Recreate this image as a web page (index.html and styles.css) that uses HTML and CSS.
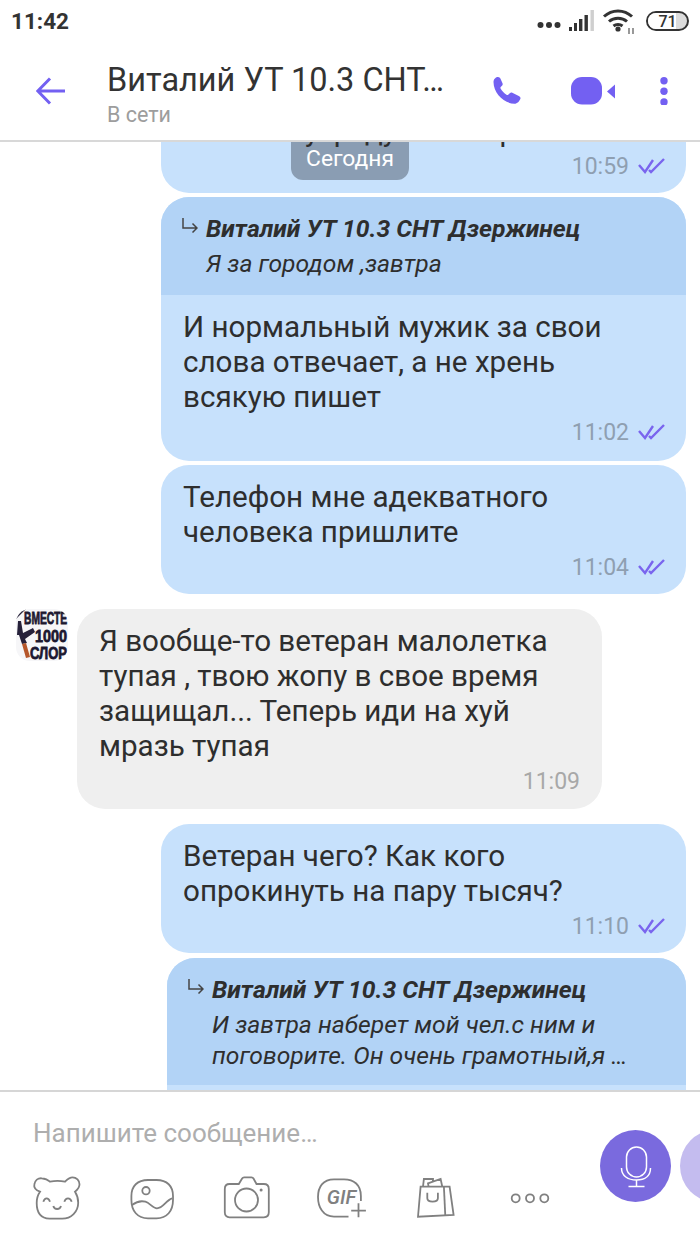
FILE: index.html
```html
<!DOCTYPE html>
<html lang="ru">
  <head>
    <meta charset="UTF-8" />
    <meta name="viewport" content="width=device-width, initial-scale=1.0" />
    <title>Виталий УТ 10.3 СНТ Дзержинец</title>
    <link rel="stylesheet" href="styles.css">
  </head>
  <body>
    <div class="screen">
      <header class="top">
        <div class="status">
          <span class="status__time">11:42</span>
          <div class="status__icons">
            <svg class="status__dots" width="24" height="8" viewBox="0 0 24 8"><circle cx="3.5" cy="4" r="3"/><circle cx="12" cy="4" r="3"/><circle cx="20.5" cy="4" r="3"/></svg>
            <svg class="status__signal" width="26" height="22" viewBox="0 0 26 22">
              <rect x="0" y="17" width="3" height="4"/><rect x="5" y="13" width="3" height="8"/><rect x="10" y="9" width="3.4" height="12"/><rect x="15.5" y="5" width="3.4" height="16"/><rect x="21.5" y="0" width="3.4" height="21" fill="#cfcfcf"/>
            </svg>
            <svg class="status__wifi" width="36" height="26" viewBox="0 0 36 26">
              <path d="M2 8.500C10 1 22 1 30 8.500M7 13.500C12 9 20 9 25 13.500M11.500 18C14 16 18 16 20.500 18" fill="none" stroke="#333" stroke-width="3"/>
              <circle cx="16" cy="21" r="2.600"/>
              <path d="M27 20v6M31 20v6" stroke="#555" stroke-width="1.200"/>
            </svg>
            <div class="battery">
              <div class="battery__fill"></div>
              <span class="battery__num">71</span>
            </div>
          </div>
        </div>
        <nav class="bar">
          <svg class="bar__back" width="30" height="28" viewBox="0 0 30 28" fill="none" stroke="#7360f2" stroke-width="3"><path d="M29 14H2M14 1.500 1.800 14 14 26.500"/></svg>
          <div class="bar__who">
            <p class="bar__name">Виталий УТ 10.3 СНТ…</p>
            <p class="bar__online">В сети</p>
          </div>
          <svg class="bar__phone" width="29" height="30" viewBox="0 0 29 30"><path d="M.5 6C.5 3 3 1 5 1c1.200 0 2 .8 2.500 1.800l2 4.500c.4 1 .2 1.700-.5 2.400L7.700 11c-.4.5-.4 1 0 1.700 1.500 2.500 3.300 4.300 5.800 6 .7.4 1.200.4 1.700 0l1.600-1.500c.8-.7 1.600-.8 2.500-.4l6.500 3.200c1.500.8 2 1.900 1.500 2.900-.8 2-3 4.800-5.800 4.800C11 27.700 .5 17 .5 6Z"/></svg>
          <svg class="bar__video" width="44" height="28" viewBox="0 0 44 28"><rect x="0" y="0" width="31" height="27.500" rx="11"/><path d="M44 7.500v14l-8-7Z"/></svg>
          <svg class="bar__more" width="8" height="28" viewBox="0 0 8 28"><circle cx="4" cy="3.700" r="3.700"/><circle cx="4" cy="14.300" r="3.700"/><circle cx="4" cy="25" r="3.700"/></svg>
        </nav>
      </header>

      <main class="chat">
        <div class="chat__date">Сегодня</div>

        <div class="msg msg--first">
          <div class="msg__body">
            <p class="msg__text msg__text--cut">у  р  ду              р</p>
            <div class="msg__meta">
              <span class="msg__time">10:59</span>
              <svg class="msg__check" width="27" height="16" viewBox="0 0 27 16"><use href="#checks"/></svg>
            </div>
          </div>
        </div>

        <div class="msg">
          <div class="msg__quote">
            <svg class="msg__arrow" width="17" height="15" viewBox="0 0 17 15" fill="none" stroke="#444" stroke-width="1.500"><path d="M2 0v10h14M11.500 5.500 16 10l-4.500 4.500"/></svg>
            <div>
              <p class="msg__author">Виталий УТ 10.3 СНТ Дзержинец</p>
              <p class="msg__quoted">Я за городом ,завтра</p>
            </div>
          </div>
          <div class="msg__body">
            <p class="msg__text">И нормальный мужик за свои<br>слова отвечает, а не хрень<br>всякую пишет</p>
            <div class="msg__meta">
              <span class="msg__time">11:02</span>
              <svg class="msg__check" width="27" height="16" viewBox="0 0 27 16"><use href="#checks"/></svg>
            </div>
          </div>
        </div>

        <div class="msg">
          <div class="msg__body">
            <p class="msg__text">Телефон мне адекватного<br>человека пришлите</p>
            <div class="msg__meta">
              <span class="msg__time">11:04</span>
              <svg class="msg__check" width="27" height="16" viewBox="0 0 27 16"><use href="#checks"/></svg>
            </div>
          </div>
        </div>

        <div class="msg-in">
          <svg class="msg-in__avatar" width="52" height="52" viewBox="0 0 52 52">
            <rect width="52" height="52" fill="#f6f6f8"/>
            <path d="M0 0h10L0 10Z" fill="#26213a"/>
            <g class="msg-in__logo">
              <text x="8" y="15" textLength="43" lengthAdjust="spacingAndGlyphs">ВМЕСТЕ</text>
              <text x="19" y="32.500" textLength="32" lengthAdjust="spacingAndGlyphs">1000</text>
              <text x="14" y="50" textLength="37" lengthAdjust="spacingAndGlyphs">СЛОР</text>
            </g>
            <path d="M2 12 5 12 7 24 17 19 19 23 9 30 11 34 6 35 3 26 1 26Z" fill="#26213a"/>
            <path d="M6 35 10 34 14 48 10 49Z" fill="#b5562a"/>
          </svg>
          <div class="msg-in__bubble">
            <p class="msg__text">Я вообще-то ветеран малолетка<br>тупая , твою жопу в свое время<br>защищал... Теперь иди на хуй<br>мразь тупая</p>
            <div class="msg__meta">
              <span class="msg__time msg__time--in">11:09</span>
            </div>
          </div>
        </div>

        <div class="msg">
          <div class="msg__body">
            <p class="msg__text">Ветеран чего? Как кого<br>опрокинуть на пару тысяч?</p>
            <div class="msg__meta">
              <span class="msg__time">11:10</span>
              <svg class="msg__check" width="27" height="16" viewBox="0 0 27 16"><use href="#checks"/></svg>
            </div>
          </div>
        </div>

        <div class="msg msg--wide">
          <div class="msg__quote">
            <svg class="msg__arrow" width="17" height="15" viewBox="0 0 17 15" fill="none" stroke="#444" stroke-width="1.500"><path d="M2 0v10h14M11.500 5.500 16 10l-4.500 4.500"/></svg>
            <div>
              <p class="msg__author">Виталий УТ 10.3 СНТ Дзержинец</p>
              <p class="msg__quoted">И завтра наберет мой чел.с ним и<br>поговорите. Он очень грамотный,я …</p>
            </div>
          </div>
          <div class="msg__body msg__body--empty"></div>
        </div>
      </main>

      <footer class="composer">
        <div class="composer__left">
          <p class="composer__hint">Напишите сообщение…</p>
          <div class="composer__tools">
            <svg width="48" height="42" viewBox="0 0 48 42" class="tool">
              <path d="M7 14.700C2.500 13 .8 10 1.300 7.500 2 3.500 5 1 8.700 1.300c3.500.2 6.300 1.500 8.300 3.400 5-1 10-1 15 0 2-2 4-4.400 7.500-4.400 4 0 7 3.500 7 7 0 3-2 5.500-4.500 7.400 2 3 3.200 7 3.200 11 0 9-7 15.900-16 15.900H16.500C7.500 41.300 3.700 35 3.700 26c0-4 1-8 3.300-11.300Z"/>
              <path d="M10.300 24.700c1.500-4.500 5.200-4.500 6.700 0M31.300 24.700c1.500-4.500 5.900-4.500 7.400 0M20.300 29c1 4 6.700 4 7.700 0"/>
            </svg>
            <svg width="48" height="42" viewBox="0 0 48 42" class="tool">
              <path d="M20 3h8.500C39 3 45 9 45 19v4c0 11-6 18.300-16.500 18.300H20C9.500 41.300 3.400 34 3.400 23v-4C3.400 9 9.500 3 20 3Z"/>
              <circle cx="18" cy="13.700" r="3.700"/>
              <path d="M4 28c4-3 9-4.500 13.400-3.300 4.500 1.300 7.500 6.600 11.600 6.600 6 0 9-8 15-10"/>
            </svg>
            <svg width="48" height="42" viewBox="0 0 48 42" class="tool">
              <path d="M7.500 7h9.300l3.300-5.500c.4-.7 1-1.200 2-1.200h7.400c1 0 1.600.5 2 1.200L34.500 7h7.300c3 0 5 2 5 5v23.300c0 3-2 5-5 5H7.500c-3 0-4.700-2-4.700-5V12c0-3 1.700-5 4.700-5Z"/>
              <circle cx="24.500" cy="23" r="11.500"/>
              <circle cx="39.100" cy="13" r="1.500" class="tool__fill"/>
            </svg>
            <div class="tool-gif">
              <svg width="52" height="42" viewBox="0 0 52 42" class="tool">
                <path d="M43.900 24V19C43.900 8 37 2.300 27 2.300H17C6 2.300 1 10 1 20s5 19.700 16 19.700h14.500"/>
                <path d="M41.500 26.300v14M34.200 33.700h14.700"/>
              </svg>
              <span class="tool-gif__label">GIF</span>
            </div>
            <svg width="48" height="42" viewBox="0 0 48 42" class="tool">
              <path d="M9.600 9.700h29l4 28.300-35.600 1.700Z"/>
              <path d="M32.900 9.700l1.400 29.300"/>
              <path d="M16.300 15.700v5.600c0 4.500 10.600 4.500 10.600 0v-5.600"/>
              <path d="M12 9.700 12.900 2H22v2.500M17.600 9.700 17 6.300 29.600 2l1.700 7.700"/>
            </svg>
            <svg width="48" height="42" viewBox="0 0 48 42" class="tool">
              <circle cx="9.700" cy="21.300" r="4"/><circle cx="24" cy="21.300" r="4"/><circle cx="38.300" cy="21.300" r="4"/>
            </svg>
          </div>
        </div>
        <div class="composer__right">
          <div class="round">
            <svg width="34" height="48" viewBox="0 0 34 48" fill="none" stroke="#fff" stroke-width="1.500">
              <rect x="7.500" y="5" width="20" height="30" rx="10"/>
              <path d="M2.500 26c0 8 6.500 12 15 12s14-4 14-12M17.500 38v6M9.500 44.500h16"/>
            </svg>
          </div>
          <div class="round round--light"></div>
        </div>
      </footer>
    </div>

    <svg class="sprite" width="0" height="0">
      <symbol id="checks" viewBox="0 0 27 16">
        <path d="M1 7l6 7L15 2M11 12l2 2L26 1" fill="none" stroke="#7a65ee" stroke-width="2.400"/>
      </symbol>
    </svg>
  </body>
</html>
```

FILE: styles.css
```css
*,
*::before,
*::after {
  padding: 0;
  margin: 0;
  box-sizing: border-box;
}

body {
  font-family: "Roboto", "Liberation Sans", sans-serif;
  background-color: #fff;
  color: #2e2e2e;
}

.sprite {
  position: absolute;
}

.screen {
  width: 700px;
  height: 1244px;
  display: flex;
  flex-direction: column;
  overflow: hidden;
}

/* top */
.top {
  height: 142px;
  flex-shrink: 0;
  background-color: #fff;
  border-bottom: 2px solid #d8d8d8;
}

.status {
  height: 42px;
  padding: 0 11px;
  display: flex;
  justify-content: space-between;
  align-items: center;
}

.status__time {
  font-size: 22.500px;
  font-weight: 700;
  color: #333;
}

.status__icons {
  display: flex;
  align-items: center;
  gap: 7px;
  fill: #333;
}

.status__dots {
  margin-top: 8px;
}

.status__signal {
  margin-left: 1px;
}

.battery {
  width: 43px;
  height: 20px;
  border: 2px solid #333;
  border-radius: 10px;
  position: relative;
  display: flex;
  justify-content: center;
  align-items: center;
  overflow: hidden;
  margin-left: 1px;
  background-color: #dcdcdc;
}

.battery__fill {
  position: absolute;
  top: 0;
  bottom: 0;
  left: 0;
  width: 71%;
  background-color: #fff;
}

.battery__num {
  position: relative;
  font-size: 16px;
  font-weight: 500;
  color: #333;
}

.bar {
  height: 98px;
  padding: 0 32px 0 36px;
  display: flex;
  align-items: center;
}

.bar__back {
  flex-shrink: 0;
  margin-right: 41px;
}

.bar__who {
  flex: 1;
  margin-top: 10px;
}

.bar__name {
  font-size: 32.500px;
  line-height: 38px;
  color: #333;
}

.bar__online {
  font-size: 21.500px;
  line-height: 32px;
  color: #9d9d9d;
}

.bar__phone,
.bar__video,
.bar__more {
  fill: #7360f2;
  flex-shrink: 0;
}

.bar__phone {
  margin-right: 49px;
}

.bar__video {
  margin-right: 45px;
}

/* chat */
.chat {
  flex: 1;
  min-height: 0;
  position: relative;
  overflow: hidden;
  display: flex;
  flex-direction: column;
  align-items: flex-end;
  background-color: #fff;
}

.chat__date {
  position: absolute;
  top: 0;
  left: 50%;
  transform: translateX(-50%);
  z-index: 2;
  width: 118px;
  height: 38px;
  border-radius: 0 0 12px 12px;
  background-color: #8a9db3;
  color: #fff;
  font-size: 22.800px;
  line-height: 34px;
  text-align: center;
}

.msg {
  width: 525px;
  margin: 0 14px 4px 0;
  flex-shrink: 0;
  border-radius: 28px;
  overflow: hidden;
  background-color: #c7e1fc;
}

.msg--first {
  margin-top: -43px;
}

.msg--wide {
  width: 519px;
  margin-top: 1px;
}

.msg__quote {
  height: 98px;
  padding: 19px 20px 0 20px;
  display: flex;
  gap: 8px;
  background-color: #b2d3f6;
  font-style: italic;
}

.msg--wide .msg__quote {
  height: 127px;
}

.msg__quote + .msg__body {
  padding-bottom: 17px;
}

.msg__arrow {
  flex-shrink: 0;
  margin-top: 2px;
}

.msg__author {
  font-size: 24.700px;
  font-weight: 700;
  line-height: 26px;
  color: #2e2e2e;
}

.msg__quoted {
  margin-top: 6px;
  font-size: 24.700px;
  line-height: 31px;
  color: #2e2e2e;
}

.msg__body {
  padding: 15px 21px 15px 22px;
}

.msg__body--empty {
  height: 120px;
}

.msg__text {
  font-size: 29.600px;
  line-height: 35px;
  color: #2e2e2e;
}

/* the scrolled-away line runs over the date badge */
.msg__text--cut {
  white-space: pre;
  padding-left: 122px;
  position: relative;
  z-index: 3;
}

.msg__meta {
  margin-top: 5px;
  height: 24px;
  display: flex;
  justify-content: flex-end;
  align-items: center;
  gap: 9px;
}

.msg__time {
  font-size: 23px;
  color: #8f9fb1;
}

.msg__time--in {
  color: #a8a8a8;
}

.msg-in {
  width: 100%;
  margin: 11px 0 15px;
  padding-left: 16px;
  flex-shrink: 0;
  display: flex;
  align-items: flex-start;
  gap: 9px;
}

.msg-in__avatar {
  flex-shrink: 0;
  border-radius: 14px;
  overflow: hidden;
}

.msg-in__logo {
  font-family: "Liberation Sans", sans-serif;
  font-size: 17px;
  font-weight: 700;
  fill: #1c1830;
  stroke: #1c1830;
  stroke-width: 0.800;
}

.msg-in__bubble {
  width: 525px;
  padding: 15px 22px 16px;
  border-radius: 28px;
  background-color: #efefef;
}

/* composer */
.composer {
  height: 154px;
  flex-shrink: 0;
  padding-left: 33px;
  display: flex;
  border-top: 2px solid #d6d6d6;
  background-color: #fff;
}

.composer__left {
  width: 567px;
  flex-shrink: 0;
}

.composer__hint {
  margin-top: 26px;
  font-size: 26px;
  line-height: 30px;
  color: #aeaeae;
}

.composer__tools {
  margin-top: 29px;
  display: flex;
  gap: 46.600px;
}

.tool {
  display: block;
  flex-shrink: 0;
  overflow: visible;
  fill: none;
  stroke: #808080;
  stroke-width: 1.800;
}

.tool__fill {
  fill: #808080;
  stroke: none;
}

.tool-gif {
  width: 48px;
  height: 42px;
  flex-shrink: 0;
  position: relative;
}

.tool-gif__label {
  position: absolute;
  top: 8px;
  left: 10px;
  font-size: 20px;
  font-weight: 500;
  font-style: italic;
  color: #808080;
}

.composer__right {
  margin-top: 38px;
  display: flex;
  align-items: flex-start;
  gap: 9px;
  flex-shrink: 0;
}

.round {
  width: 71px;
  height: 72px;
  flex-shrink: 0;
  border-radius: 50%;
  background-color: #7a6ade;
  display: flex;
  justify-content: center;
  align-items: center;
}

.round--light {
  background-color: #c4bcef;
}
```
